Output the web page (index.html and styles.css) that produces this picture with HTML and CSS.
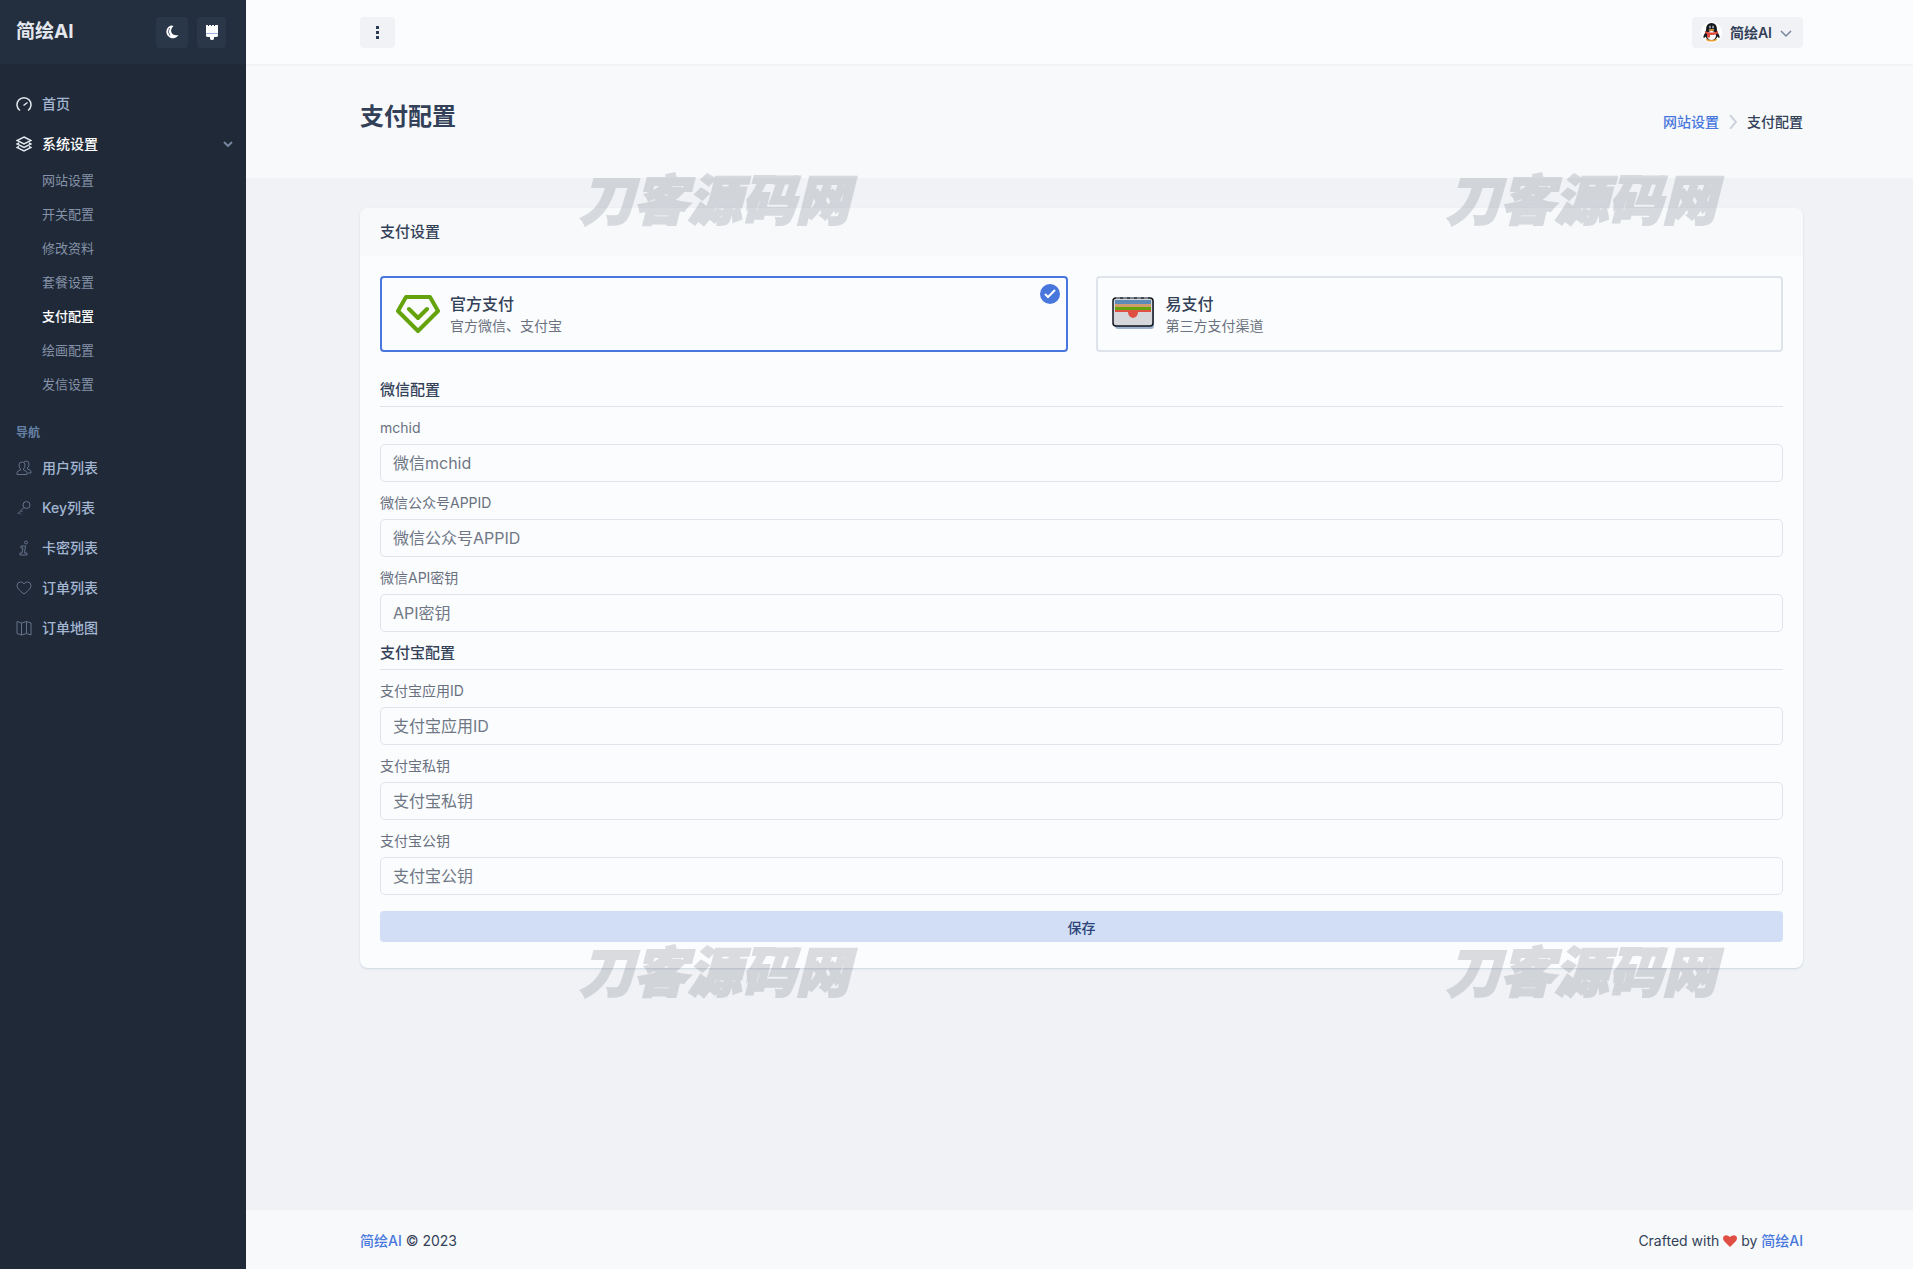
FILE: index.html
```
<!DOCTYPE html>
<html lang="zh-CN">
<head>
    <meta charset="UTF-8">
    <meta name="viewport" content="width=device-width, initial-scale=1.0">
    <title>支付配置 - 简绘AI</title>
    <link rel="stylesheet" href="styles.css">
</head>
<body>
    <!-- Sidebar -->
    <aside class="sidebar">
        <div class="sidebar-header">
            <a class="brand" href="#">简绘AI</a>
            <button type="button" class="side-btn" aria-label="夜间模式">
                <svg width="14" height="14" viewBox="0 0 14 14"><path d="M6 .5A6.500 6.500 0 1 0 13.500 10Q8 11 6.500 7.500 5 4 8.500 1 7.500.5 6 .5Z" fill="#fff"/><path d="M4.500 3Q2 7 5 10.500" fill="none" stroke="#5d6c82"/></svg>
            </button>
            <button type="button" class="side-btn side-btn-sm" aria-label="主题">
                <svg width="12" height="15" viewBox="0 0 12 15"><path d="M0 0h2v1h1V0h2v1h1V0h2v1h1V0h3v8H0Z" fill="#fff"/><path d="M0 9h12v1.500Q12 12 10 12H8v1.500a2 1.500 0 0 1-4 0V12H2Q0 12 0 10.500Z" fill="#fff"/><path d="M0 8h12v1H0Z" fill="#9db4dc"/></svg>
            </button>
        </div>
        <nav class="side-nav">
            <a class="nav-item" href="#">
                <svg class="bright" viewBox="0 0 16 16"><path d="M4 14.500A7 7 0 1 1 12 14.500M7.500 9.500l4-3" /></svg>
                <span>首页</span>
            </a>
            <a class="nav-item active" href="#">
                <svg class="bright" viewBox="0 0 16 16"><path d="M8 1 15 4.500 8 8 1 4.500ZM3 7 1 8l7 3.500L15 8l-2-1M3 10.500 1 11.500 8 15l7-3.500-2-1"/></svg>
                <span>系统设置</span>
                <svg class="caret" viewBox="0 0 10 6"><path d="M1 1l4 4 4-4"/></svg>
            </a>
            <div class="submenu">
                <a href="#">网站设置</a>
                <a href="#">开关配置</a>
                <a href="#">修改资料</a>
                <a href="#">套餐设置</a>
                <a class="active" href="#">支付配置</a>
                <a href="#">绘画配置</a>
                <a href="#">发信设置</a>
            </div>
            <div class="nav-heading">导航</div>
            <a class="nav-item" href="#">
                <svg viewBox="0 0 16 16"><path d="M1 14.500v-2q0-1.500 3.500-2.500V9Q3 7.500 3 5q0-3 3-3t3 3q0 2.500-1.500 4v1q3.500 1 3.500 2.500v2ZM8 2q1-1 2-1 3 0 3 3 0 2.500-1.500 4v1q3.500 1 3.500 2.500v1.500h-3"/></svg>
                <span>用户列表</span>
            </a>
            <a class="nav-item" href="#">
                <svg viewBox="0 0 16 16"><circle cx="10.500" cy="5" r="3.500"/><path d="M8 7.500 1.500 14M3 12.500l2 2M5 10.500l1.500 1.500"/></svg>
                <span>Key列表</span>
            </a>
            <a class="nav-item" href="#">
                <svg viewBox="0 0 16 16"><circle cx="10" cy="2.500" r="1.500"/><path d="M5 6h4.500L8.500 13H11v2H4v-2h2L7 8H5Z"/></svg>
                <span>卡密列表</span>
            </a>
            <a class="nav-item" href="#">
                <svg viewBox="0 0 16 16"><path d="M8 14Q1 9 1 5.500 1 2 4.500 2 7 2 8 4q1-2 3.500-2Q15 2 15 5.500 15 9 8 14Z"/></svg>
                <span>订单列表</span>
            </a>
            <a class="nav-item" href="#">
                <svg viewBox="0 0 16 16"><path d="M1 1.500 5.500 3 10.500 1.500 15 3v12l-4.500-1.500L5.500 15 1 13.500ZM5.500 3v12M10.500 1.500v12"/></svg>
                <span>订单地图</span>
            </a>
        </nav>
    </aside>

    <div class="page">
        <!-- Header -->
        <header class="topbar container">
            <button type="button" class="top-btn top-menu" aria-label="菜单">
                <svg width="3" height="13" viewBox="0 0 3 13"><path d="M0 0h3v3H0zM0 5h3v3H0zM0 10h3v3H0z" fill="#2b3b52"/></svg>
            </button>
            <button type="button" class="top-btn user-btn">
                <svg class="avatar" width="21" height="21" viewBox="0 0 21 21">
                    <circle cx="10.500" cy="10.500" r="10.500" fill="#fff"/>
                    <ellipse cx="10.500" cy="17.500" rx="5.500" ry="2" fill="#e8a13a"/>
                    <path d="M5 8Q5 1 10.500 1T16 8q0 1.500 1 3 2 3 1.500 5-1 0-2-1.500Q15 18 10.500 18T4.500 14.500Q3.500 16 2.500 16 2 14 4 11q1-1.500 1-3Z" fill="#15191f"/>
                    <ellipse cx="10.500" cy="13.500" rx="4.500" ry="4.500" fill="#fff"/>
                    <path d="M4 9q6.500 3 13 0v2.500q-4 2-8 1.500v2.500H6V12l-2-1Z" fill="#dc4a3e"/>
                    <ellipse cx="9" cy="5" rx="1" ry="1.500" fill="#9aa0a8"/><ellipse cx="12" cy="5" rx="1" ry="1.500" fill="#9aa0a8"/>
                    <ellipse cx="10.500" cy="8" rx="3" ry="1" fill="#d89b35"/>
                </svg>
                <span>简绘AI</span>
                <svg class="user-caret" width="12" height="8" viewBox="0 0 12 8"><path d="M1 1l5 5 5-5" fill="none" stroke="#75859c" stroke-width="1.500"/></svg>
            </button>
        </header>

        <!-- Page Title -->
        <div class="hero container">
            <h1>支付配置</h1>
            <nav class="breadcrumb">
                <a href="#">网站设置</a>
                <svg width="8" height="14" viewBox="0 0 8 14"><path d="M1 0l6 7-6 7" fill="none" stroke="#cdd2dc" stroke-width="2"/></svg>
                <span>支付配置</span>
            </nav>
        </div>

        <!-- Payment Settings -->
        <main class="content container">
            <form class="card">
                <h3 class="card-header">支付设置</h3>
                <div class="card-body">
                    <div class="choices">
                        <label class="choice" for="pay-official">
                            <input type="radio" id="pay-official" name="pay" checked>
                            <svg width="44" height="40" viewBox="0 0 44 40" fill="none" stroke="#65a30d" stroke-width="4" stroke-linecap="round" stroke-linejoin="round"><path d="M10 3H34L42 17 22 37 2 17ZM13 15l9 9 9-9"/></svg>
                            <span class="choice-text">
                                <span class="choice-title">官方支付</span>
                                <span class="choice-desc">官方微信、支付宝</span>
                            </span>
                            <span class="choice-check"><svg width="12" height="10" viewBox="0 0 12 10"><path d="M1 5l3 3 7-7" fill="none" stroke="#fff" stroke-width="2"/></svg></span>
                        </label>
                        <label class="choice" for="pay-easy">
                            <input type="radio" id="pay-easy" name="pay">
                            <svg width="44" height="40" viewBox="0 0 44 40">
                                <rect x="3" y="6" width="39" height="29" rx="3" fill="#9db0d0"/>
                                <rect x="1" y="4" width="40" height="28" rx="3" fill="#d5d7db" stroke="#11151c" stroke-width="1.500"/>
                                <path d="M4 4h34" stroke="#b9c2cf" stroke-dasharray="4 3"/>
                                <path d="M3 6h36v4H3z" fill="#5d8bb8"/>
                                <path d="M3 10h36v3H3z" fill="#cf9c6a"/>
                                <path d="M3 13h36v3H3z" fill="#65a30d"/>
                                <path d="M3 16h36v2H26q0 5-5 6-5-1-5-6H3z" fill="#e04f44"/>
                            </svg>
                            <span class="choice-text">
                                <span class="choice-title">易支付</span>
                                <span class="choice-desc">第三方支付渠道</span>
                            </span>
                            <span class="choice-check"></span>
                        </label>
                    </div>

                    <h4 class="section-title">微信配置</h4>
                    <div class="field">
                        <label for="mchid">mchid</label>
                        <input type="text" id="mchid" placeholder="微信mchid">
                    </div>
                    <div class="field">
                        <label for="appid">微信公众号APPID</label>
                        <input type="text" id="appid" placeholder="微信公众号APPID">
                    </div>
                    <div class="field">
                        <label for="apikey">微信API密钥</label>
                        <input type="text" id="apikey" placeholder="API密钥">
                    </div>

                    <h4 class="section-title">支付宝配置</h4>
                    <div class="field">
                        <label for="alipay-id">支付宝应用ID</label>
                        <input type="text" id="alipay-id" placeholder="支付宝应用ID">
                    </div>
                    <div class="field">
                        <label for="alipay-private">支付宝私钥</label>
                        <input type="text" id="alipay-private" placeholder="支付宝私钥">
                    </div>
                    <div class="field">
                        <label for="alipay-public">支付宝公钥</label>
                        <input type="text" id="alipay-public" placeholder="支付宝公钥">
                    </div>
                    <button type="submit" class="save-btn">保存</button>
                </div>
            </form>
        </main>

        <!-- Footer -->
        <footer class="footer container">
            <div><a href="#">简绘AI</a> © 2023</div>
            <div class="crafted">Crafted with
                <svg width="14" height="12" viewBox="0 0 14 12"><path d="M7 12 1 6Q-1 3 1 1 4-1 7 2q3-3 6-1 2 2 0 5Z" fill="#e04f44"/></svg>
                by <a href="#">简绘AI</a>
            </div>
        </footer>

        <!-- Watermarks -->
        <div class="watermark wm-top wm-left">刀客源码网</div>
        <div class="watermark wm-top wm-right">刀客源码网</div>
        <div class="watermark wm-bottom wm-left">刀客源码网</div>
        <div class="watermark wm-bottom wm-right">刀客源码网</div>
    </div>
</body>
</html>
```
FILE: styles.css
```
* {
    box-sizing: border-box;
}
body {
    margin: 0;
    min-height: 100vh;
    display: flex;
    font-family: Inter, "Noto Sans CJK SC", sans-serif;
    font-size: 14px;
    line-height: 20px;
    color: #334158;
    background-color: #f0f2f5;
}
a {
    color: #4777dd;
    font-weight: 500;
    text-decoration: none;
}
button, input {
    font-family: inherit;
}
button {
    border: 0;
    border-radius: 4px;
    cursor: pointer;
}

/* Sidebar */
.sidebar {
    flex: 0 0 246px;
    background-color: #1f2937;
}
.sidebar-header {
    display: flex;
    align-items: center;
    height: 64px;
    padding: 0 20px 0 16px;
    background-color: #232f3f;
}
.brand {
    flex: 1;
    font-size: 19px;
    line-height: 24px;
    font-weight: 700;
    color: #e4e7ed;
}
.side-btn {
    display: flex;
    align-items: center;
    justify-content: center;
    width: 32px;
    height: 31px;
    padding: 0;
    background-color: #2a3748;
}
.side-btn-sm {
    width: 29px;
    margin-left: 9px;
}
.side-nav {
    padding-top: 20px;
}
.nav-item {
    display: flex;
    align-items: center;
    gap: 10px;
    height: 40px;
    padding: 0 13px 0 16px;
    color: #a3b6d3;
}
.nav-item svg {
    width: 16px;
    height: 16px;
    fill: none;
    stroke: #64728a;
}
.nav-item .bright {
    stroke: #e4e9f0;
    stroke-width: 1.5;
}
.nav-item .caret {
    width: 10px;
    height: 6px;
    margin-left: auto;
    stroke: #75859c;
    stroke-width: 2;
}
.nav-item.active, .submenu .active {
    color: #fff;
}
.submenu a {
    display: block;
    padding: 6px 0 8px 42px;
    font-size: 13px;
    font-weight: 400;
    color: #8592a8;
}
.submenu .active {
    font-weight: 500;
}
.nav-heading {
    padding: 21px 16px 5px;
    font-size: 12px;
    font-weight: 600;
    color: #6581a5;
}

/* Page */
.page {
    position: relative;
    flex: 1;
    display: flex;
    flex-direction: column;
}
.container {
    display: flex;
    padding-left: 114px;
    padding-right: 110px;
}
.topbar {
    align-items: center;
    justify-content: space-between;
    height: 66px;
    border-bottom: 2px solid #f1f3f6;
    background-color: #fbfcfe;
}
.top-btn {
    display: flex;
    align-items: center;
    justify-content: center;
    height: 31px;
    background-color: #f0f2f5;
}
.top-menu {
    width: 35px;
    padding: 0;
}
.user-btn {
    padding: 0 11px 0 9px;
    gap: 8px;
    font-size: 14px;
    font-weight: 600;
    color: #334158;
}
.user-caret {
    margin-top: 3px;
}
.hero {
    align-items: center;
    justify-content: space-between;
    height: 112px;
    padding-bottom: 10px;
    background-color: #f7f9fb;
}
.hero h1 {
    margin: 0;
    font-size: 24px;
    line-height: 30px;
    font-weight: 700;
}
.breadcrumb {
    display: flex;
    align-items: center;
    gap: 10px;
    padding-top: 10px;
    font-weight: 500;
}
.content {
    flex: 1;
    flex-direction: column;
    padding-top: 30px;
    padding-bottom: 30px;
}
.card {
    border-radius: 8px;
    overflow: hidden;
    background-color: #fbfcfe;
    box-shadow: 0 1px 2px #ccd5df;
}
.card-header {
    margin: 0;
    padding: 14px 20px;
    font-size: 15px;
    line-height: 20px;
    font-weight: 500;
    background-color: #f7f9fb;
}
.card-body {
    padding: 20px 20px 26px;
}
.choices {
    display: grid;
    grid-template-columns: 1fr 1fr;
    gap: 28px;
    margin-bottom: 28px;
}
.choice {
    position: relative;
    display: flex;
    align-items: center;
    gap: 10px;
    height: 76px;
    padding: 0 14px;
    border: 2px solid #dfe3ea;
    border-radius: 4px;
    cursor: pointer;
}
.choice:has(input:checked) {
    border-color: #4777dd;
}
.choice input {
    position: absolute;
    opacity: 0;
}
.choice-text {
    display: flex;
    flex-direction: column;
}
.choice-title {
    font-size: 16px;
    line-height: 24px;
    font-weight: 500;
}
.choice-desc {
    color: #6b7280;
}
.choice-check {
    display: none;
    position: absolute;
    top: 6px;
    right: 6px;
    width: 20px;
    height: 20px;
    border-radius: 50%;
    background-color: #4777dd;
}
.choice input:checked ~ .choice-check {
    display: flex;
    align-items: center;
    justify-content: center;
}
.section-title {
    margin: 0 0 11px;
    padding-bottom: 6px;
    border-bottom: 1px solid #dfe3ea;
    font-size: 15px;
    line-height: 20px;
    font-weight: 500;
}
.field {
    margin-bottom: 11px;
}
.field label {
    display: block;
    margin-bottom: 6px;
    line-height: 20px;
    color: #69717f;
}
.field input {
    display: block;
    width: 100%;
    height: 38px;
    padding: 0 12px;
    border: 1px solid #dfe3ea;
    border-radius: 5px;
    font-size: 16px;
    color: #334158;
    background-color: #fbfcfe;
}
.field input::placeholder {
    color: #6f7785;
}
.save-btn {
    display: block;
    width: 100%;
    height: 31px;
    margin-top: 16px;
    padding: 0;
    font-size: 14px;
    font-weight: 500;
    color: #2c4478;
    background-color: #d2def6;
}
.footer {
    align-items: center;
    justify-content: space-between;
    height: 59px;
    padding-top: 2px;
    background-color: #f7f9fb;
}
.crafted svg {
    vertical-align: -1px;
}

/* Watermarks */
.watermark {
    position: absolute;
    font-size: 54px;
    line-height: 56px;
    font-weight: 900;
    font-style: italic;
    white-space: nowrap;
    color: #80858f;
    -webkit-text-stroke: 2px #80858f;
    opacity: 0.27;
    pointer-events: none;
}
.wm-top {
    top: 173px;
}
.wm-bottom {
    top: 945px;
}
.wm-left {
    left: 20%;
}
.wm-right {
    left: 72%;
}
```
